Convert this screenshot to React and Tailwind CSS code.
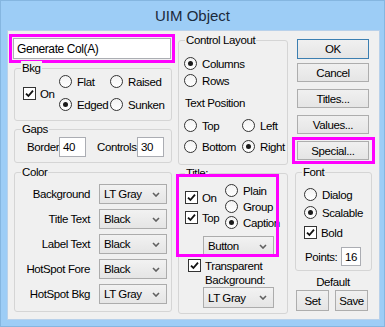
import React from "react";

/* Windows 8 style "UIM Object" dialog */

const Radio = ({ checked }) => (
  <span className="w-[13px] h-[13px] rounded-full border border-[#333] bg-linear-to-b from-[#f3f3f3] to-white flex items-center justify-center shrink-0">
    {checked && <span className="w-[5px] h-[5px] rounded-full bg-[#1a1a1a]" />}
  </span>
);

const Check = () => (
  <span className="w-[13px] h-[13px] border border-[#333] bg-white flex items-center justify-center shrink-0">
    <svg width="9" height="9" viewBox="0 0 9 9">
      <path d="M1 4.6 L3.4 7 L8 1.6" stroke="#111" strokeWidth="1.8" fill="none" />
    </svg>
  </span>
);

const Opt = ({ checked, box, children, className = "" }) => (
  <div className={`flex items-center h-[13px] whitespace-nowrap ${box ? "gap-[4px]" : "gap-[5px]"} ${className}`}>
    {box ? <Check /> : <Radio checked={checked} />}
    <span>{children}</span>
  </div>
);

const Combo = ({ value, className = "" }) => (
  <div className={`flex items-center justify-between h-[20px] border border-[#acacac] bg-linear-to-b from-[#f2f2f2] to-[#e5e5e5] pl-[4px] pr-[6px] ${className}`}>
    <span>{value}</span>
    <svg width="8" height="5" viewBox="0 0 8 5">
      <path d="M1 1 L4 4 L7 1" stroke="#606060" strokeWidth="1.6" fill="none" />
    </svg>
  </div>
);

const Btn = ({ children, className = "" }) => (
  <div className={`flex items-center justify-center border bg-linear-to-b from-[#f0f0f0] to-[#e5e5e5] ${className}`}>
    {children}
  </div>
);

const Edit = ({ value, className = "" }) => (
  <div className={`flex items-center bg-white border border-[#abadb3] pl-[3px] ${className}`}>{value}</div>
);

const Group = ({ label, className = "", children }) => (
  <div className={`relative border border-[#d5d5d5] rounded-[3px] ${className}`}>
    <span className="absolute left-[6px] top-[-8px] px-[1px] bg-[#f0f0f0] leading-[14px] whitespace-nowrap">{label}</span>
    {children}
  </div>
);

export default function App() {
  return (
    <div className="w-[385px] h-[327px] bg-[#9dcdf6] border border-[#85b6e0] flex flex-col font-['Liberation_Sans',Arial,sans-serif] text-[11.5px] tracking-[-0.4px] leading-[14px] text-black">
      <div className="h-[29px] flex items-center justify-center text-[15px] tracking-normal text-[#1b2a3c]">UIM Object</div>

      <div className="ml-[6px] mr-[4px] h-[290px] border border-[#b9d1ea] bg-[#f0f0f0] flex">
        {/* left column */}
        <div className="ml-[1px] w-[166px] flex flex-col">
          <div className="mt-[3px] h-[29px] border-[3px] border-[#ff00ff] p-[1px]">
            <Edit value="Generate Col(A)" className="h-full text-[12px]" />
          </div>

          <Group label="Bkg" className="mt-[5px] ml-[5px] w-[158px] h-[53px]">
            <div className="flex pl-[8px] pt-[6px]">
              <div className="w-[36px] mt-[12px]">
                <Opt box>On</Opt>
              </div>
              <div className="grid grid-cols-[51px_auto] gap-y-[10px]">
                <Opt>Flat</Opt>
                <Opt>Raised</Opt>
                <Opt checked>Edged</Opt>
                <Opt>Sunken</Opt>
              </div>
            </div>
          </Group>

          <Group label="Gaps" className="mt-[8px] ml-[5px] w-[158px] h-[34px]">
            <div className="flex items-center pl-[12px] pt-[7px]">
              <span className="w-[32px]">Border</span>
              <Edit value="40" className="w-[27px] h-[20px]" />
              <span className="ml-[11px] w-[40px]">Controls</span>
              <Edit value="30" className="w-[27px] h-[20px]" />
            </div>
          </Group>

          <Group label="Color" className="mt-[9px] ml-[5px] w-[158px] h-[140px]">
            <div className="grid grid-cols-[74px_68px] gap-x-[9px] gap-y-[5px] items-center pl-[1px] pt-[11px]">
              <span className="text-right whitespace-nowrap">Background</span>
              <Combo value="LT Gray" />
              <span className="text-right whitespace-nowrap">Title Text</span>
              <Combo value="Black" />
              <span className="text-right whitespace-nowrap">Label Text</span>
              <Combo value="Black" />
              <span className="text-right whitespace-nowrap">HotSpot Fore</span>
              <Combo value="Black" />
              <span className="text-right whitespace-nowrap">HotSpot Bkg</span>
              <Combo value="LT Gray" />
            </div>
          </Group>
        </div>

        {/* middle column */}
        <div className="ml-[3px] w-[110px] flex flex-col">
          <Group label="Control Layout" className="mt-[9px] h-[125px]">
            <div className="flex flex-col pl-[5px] pt-[16px]">
              <Opt checked>Columns</Opt>
              <Opt className="mt-[4px]">Rows</Opt>
              <span className="mt-[9px] ml-[1px] whitespace-nowrap">Text Position</span>
              <div className="mt-[9px] grid grid-cols-[58px_auto] gap-y-[8px]">
                <Opt>Top</Opt>
                <Opt>Left</Opt>
                <Opt>Bottom</Opt>
                <Opt checked>Right</Opt>
              </div>
            </div>
          </Group>

          <Group label="Title:" className="mt-[8px] h-[141px]">
            <div className="flex pl-[6px] pt-[10px]">
              <div className="w-[40px] mt-[7px] flex flex-col gap-[7px]">
                <Opt box>On</Opt>
                <Opt box>Top</Opt>
              </div>
              <div className="flex flex-col gap-[3px]">
                <Opt>Plain</Opt>
                <Opt>Group</Opt>
                <Opt checked>Caption</Opt>
              </div>
            </div>
            <Combo value="Button" className="mt-[7px] ml-[24px] w-[71px]" />
            <Opt box className="mt-[3px] ml-[9px]">Transparent</Opt>
            <div className="mt-[1px] ml-[26px] whitespace-nowrap">Background:</div>
            <Combo value="LT Gray" className="ml-[24px] w-[71px] h-[21px]" />
            <div className="absolute left-[-3px] top-0 w-[103px] h-[83px] border-[3px] border-[#ff00ff]" />
          </Group>
        </div>

        {/* right column */}
        <div className="ml-[7px] w-[77px] flex flex-col">
          <Btn className="mt-[8px] ml-[2px] w-[72px] h-[20px] border-[#3c7fb1]">OK</Btn>
          <Btn className="mt-[4px] ml-[2px] w-[72px] h-[19px] border-[#adadad]">Cancel</Btn>
          <Btn className="mt-[7px] ml-[2px] w-[72px] h-[19px] border-[#adadad]">Titles...</Btn>
          <Btn className="mt-[7px] ml-[2px] w-[72px] h-[19px] border-[#adadad]">Values...</Btn>
          <div className="relative mt-[7px] ml-[2px] w-[72px] h-[19px]">
            <Btn className="w-full h-full border-[#adadad]">Special...</Btn>
            <div className="absolute left-[-5px] top-[-4px] w-[83px] h-[27px] border-[3px] border-[#ff00ff]" />
          </div>

          <Group label="Font" className="mt-[12px] h-[99px]">
            <div className="flex flex-col pl-[8px] pt-[15px]">
              <Opt>Dialog</Opt>
              <Opt checked className="mt-[5px]">Scalable</Opt>
              <Opt box className="mt-[7px]">Bold</Opt>
              <div className="mt-[8px] flex items-center">
                <span className="w-[37px] pl-[1px]">Points:</span>
                <Edit value="16" className="w-[20px] h-[19px]" />
              </div>
            </div>
          </Group>

          <div className="mt-[4px] ml-[1px] w-[74px] text-center">Default</div>
          <div className="mt-[1px] flex">
            <Btn className="ml-[1px] w-[33px] h-[21px] border-[#adadad]">Set</Btn>
            <Btn className="ml-[6px] w-[33px] h-[21px] border-[#adadad]">Save</Btn>
          </div>
        </div>
      </div>
    </div>
  );
}
